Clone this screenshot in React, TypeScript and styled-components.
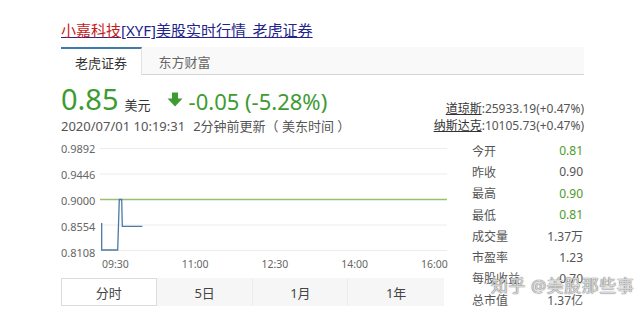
import React from "react";
import styled, { createGlobalStyle } from "styled-components";

const GlobalStyle = createGlobalStyle`
  html, body { margin: 0; padding: 0; background: #fff; }
  body { font-family: "Noto Sans", "Noto Sans CJK SC", sans-serif; color: #444; }
  * { box-sizing: border-box; }
`;

const Page = styled.div`
  position: relative;
  width: 640px;
  height: 315px;
  overflow: hidden;
  padding: 19px 0 0 61px;
`;

const Content = styled.div`
  width: 523px;
`;

const Title = styled.a`
  display: inline-block;
  font-size: 15px;
  line-height: 18px;
  color: #23238c;
  text-decoration: underline;
  cursor: pointer;
`;

const TitleRed = styled.span`
  color: #c41a1a;
`;

const TabBar = styled.div`
  margin-top: 6px;
  display: flex;
  height: 28px;
  background: #f9f9f9;
  border-bottom: 1px solid #d4d4d4;
`;

const Tab = styled.div<{ $active?: boolean }>`
  width: ${(p) => (p.$active ? "81px" : "85px")};
  display: flex;
  align-items: center;
  justify-content: center;
  font-size: 13px;
  color: ${(p) => (p.$active ? "#333" : "#666")};
  background: ${(p) => (p.$active ? "#fff" : "transparent")};
  border-top: 2px solid ${(p) => (p.$active ? "#3d7cab" : "transparent")};
  border-right: ${(p) => (p.$active ? "1px solid #e2e2e2" : "none")};
  margin-bottom: ${(p) => (p.$active ? "-1px" : "0")};
`;

const Header = styled.div`
  display: flex;
  justify-content: space-between;
  align-items: flex-end;
  margin-top: 9px;
`;

const QuoteCol = styled.div`
  display: flex;
  flex-direction: column;
  gap: 4px;
`;

const PriceRow = styled.div`
  display: flex;
  align-items: baseline;
  height: 30px;
  color: #3e9b32;
`;

const Price = styled.span`
  font-size: 29px;
  line-height: 30px;
`;

const Unit = styled.span`
  font-size: 13px;
  color: #333;
  margin-left: 6px;
`;

const Arrow = styled.svg`
  width: 16px;
  height: 15px;
  margin: 0 6px 0 16px;
  align-self: center;
`;

const Change = styled.span`
  font-size: 22px;
  line-height: 30px;
`;

const DateLine = styled.div`
  font-size: 13px;
  line-height: 17px;
  color: #555;
  display: flex;
  gap: 8px;
`;

const IndexCol = styled.div`
  display: flex;
  flex-direction: column;
  align-items: flex-end;
  font-size: 12px;
  line-height: 17px;
  color: #555;
  margin-bottom: 1px;
`;

const IndexName = styled.span`
  text-decoration: underline;
  color: #333;
`;

const Main = styled.div`
  display: flex;
  gap: 26px;
  margin-top: 5px;
`;

const ChartCol = styled.div`
  width: 385px;
  display: flex;
  flex-direction: column;
`;

const ChartGrid = styled.div`
  display: grid;
  grid-template-columns: 39px 347px;
`;

const YAxis = styled.div`
  display: flex;
  flex-direction: column;
  justify-content: space-between;
  height: 118px;
  margin-top: 2px;
  font-size: 11px;
  line-height: 14px;
  color: #666;
`;

const Plot = styled.svg`
  width: 347px;
  height: 106px;
  margin-top: 7px;
`;

const XAxis = styled.div`
  display: flex;
  justify-content: space-between;
  margin: -3px 0 0 41px;
  width: 345px;
  font-size: 10.5px;
  line-height: 14px;
  color: #666;
`;

const XLabel = styled.span`
  width: 26px;
  text-align: center;
`;

const RangeTabs = styled.div`
  display: flex;
  margin-top: 7px;
  width: 383px;
  height: 28px;
  background: #f6f6f6;
`;

const RangeTab = styled.div<{ $active?: boolean }>`
  flex: 1;
  display: flex;
  align-items: center;
  justify-content: center;
  font-size: 13px;
  color: #444;
  background: ${(p) => (p.$active ? "#fff" : "transparent")};
  border: 1px solid ${(p) => (p.$active ? "#dcdcdc" : "transparent")};
  border-right: 1px solid ${(p) => (p.$active ? "#dcdcdc" : "#ececec")};
  &:last-child { border-right-color: transparent; }
`;

const Stats = styled.div`
  width: 111px;
  display: flex;
  flex-direction: column;
`;

const StatRow = styled.div`
  display: flex;
  justify-content: space-between;
  height: 21.3px;
  align-items: center;
  font-size: 12px;
  color: #555;
`;

const StatValue = styled.span<{ $green?: boolean }>`
  color: ${(p) => (p.$green ? "#4c9a2a" : "#555")};
`;

const Watermark = styled.div`
  position: absolute;
  left: 491px;
  top: 276px;
  font-size: 17px;
  line-height: 20px;
  color: rgba(255, 255, 255, 0.75);
  text-shadow: 0 0 1px rgba(90, 90, 90, 0.9), 0 0 1px rgba(90, 90, 90, 0.9);
  letter-spacing: 0.5px;
  pointer-events: none;
`;

const stats: { label: string; value: string; green?: boolean }[] = [
  { label: "今开", value: "0.81", green: true },
  { label: "昨收", value: "0.90" },
  { label: "最高", value: "0.90", green: true },
  { label: "最低", value: "0.81", green: true },
  { label: "成交量", value: "1.37万" },
  { label: "市盈率", value: "1.23" },
  { label: "每股收益", value: "0.70" },
  { label: "总市值", value: "1.37亿" },
];

const yLabels = ["0.9892", "0.9446", "0.9000", "0.8554", "0.8108"];
const gridY = [1.5, 27, 78, 103.5];

export default function App() {
  return (
    <>
      <GlobalStyle />
      <Page>
        <Content>
          <Title>
            <TitleRed>小嘉科技</TitleRed>[XYF]美股实时行情_老虎证券
          </Title>
          <TabBar>
            <Tab $active>老虎证券</Tab>
            <Tab>东方财富</Tab>
          </TabBar>
          <Header>
            <QuoteCol>
              <PriceRow>
                <Price>0.85</Price>
                <Unit>美元</Unit>
                <Arrow viewBox="0 0 16 15">
                  <rect x="5" y="0.5" width="6" height="7" fill="#3e9b32" />
                  <polygon points="0.5,6.5 15.5,6.5 8,14.5" fill="#3e9b32" />
                </Arrow>
                <Change>-0.05 (-5.28%)</Change>
              </PriceRow>
              <DateLine>
                <span>2020/07/01 10:19:31</span>
                <span>2分钟前更新（ 美东时间 ）</span>
              </DateLine>
            </QuoteCol>
            <IndexCol>
              <div>
                <IndexName>道琼斯</IndexName>:25933.19(+0.47%)
              </div>
              <div>
                <IndexName>纳斯达克</IndexName>:10105.73(+0.47%)
              </div>
            </IndexCol>
          </Header>
          <Main>
            <ChartCol>
              <ChartGrid>
                <YAxis>
                  {yLabels.map((l) => (
                    <span key={l}>{l}</span>
                  ))}
                </YAxis>
                <Plot viewBox="0 0 347 106">
                  {gridY.map((y) => (
                    <line key={y} x1="0" x2="347" y1={y} y2={y} stroke="#ececec" strokeWidth="1" />
                  ))}
                  <line x1="0" x2="347" y1="52.5" y2="52.5" stroke="#95c170" strokeWidth="1.5" />
                  <polyline
                    points="1.7,76 1.7,103 17.7,103 19.3,52.5 21.7,52.5 22.3,79.3 42.3,79.3"
                    fill="none"
                    stroke="#4a7aa6"
                    strokeWidth="1.3"
                  />
                </Plot>
              </ChartGrid>
              <XAxis>
                <XLabel>09:30</XLabel>
                <XLabel>11:00</XLabel>
                <XLabel>12:30</XLabel>
                <XLabel>14:00</XLabel>
                <XLabel>16:00</XLabel>
              </XAxis>
              <RangeTabs>
                <RangeTab $active>分时</RangeTab>
                <RangeTab>5日</RangeTab>
                <RangeTab>1月</RangeTab>
                <RangeTab>1年</RangeTab>
              </RangeTabs>
            </ChartCol>
            <Stats>
              {stats.map((s) => (
                <StatRow key={s.label}>
                  <span>{s.label}</span>
                  <StatValue $green={s.green}>{s.value}</StatValue>
                </StatRow>
              ))}
            </Stats>
          </Main>
        </Content>
        <Watermark>知乎 @美股那些事</Watermark>
      </Page>
    </>
  );
}
